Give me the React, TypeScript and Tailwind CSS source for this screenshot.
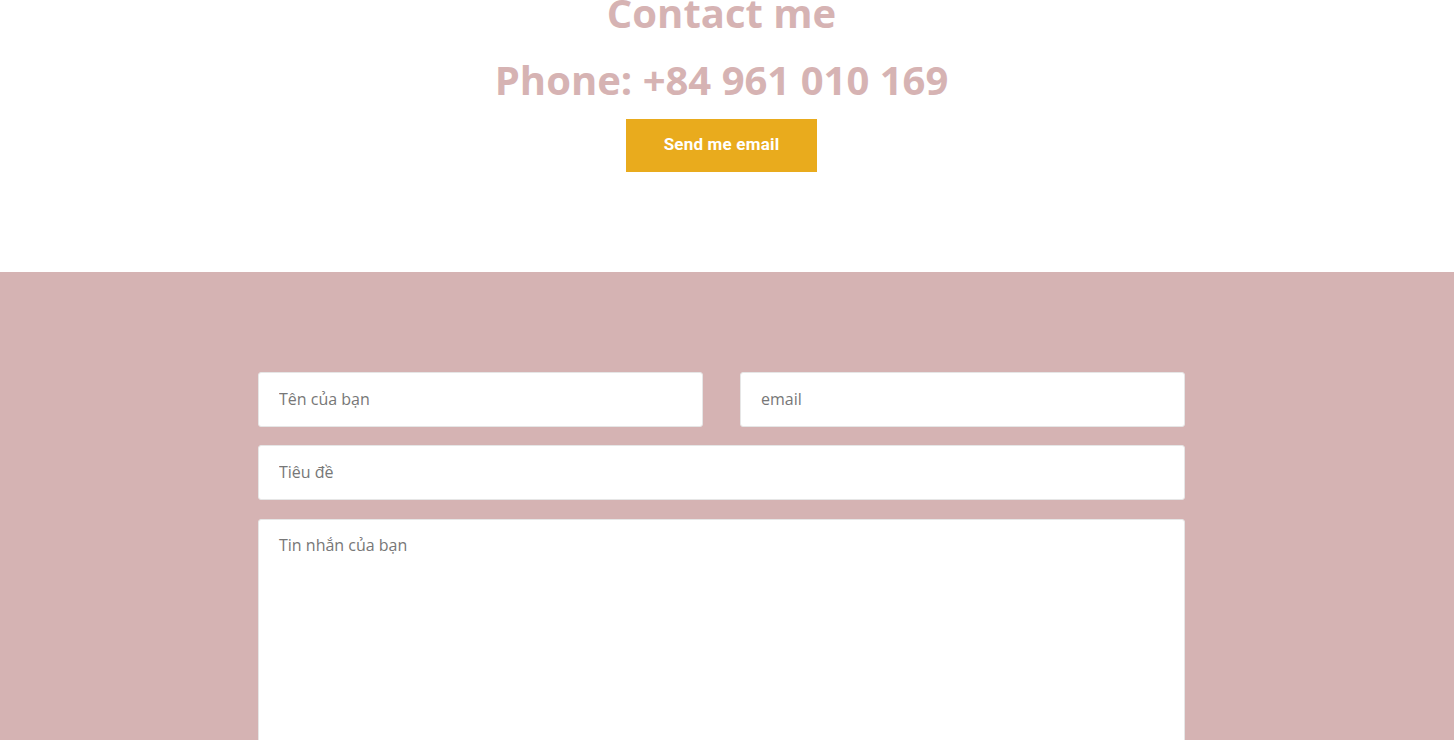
import React from 'react';

export default function App() {
  return <div className="min-h-[740px] bg-white pr-[11px]" style={{ fontFamily: '"Open Sans", sans-serif' }}>
      <section className="flex flex-col items-center bg-white pb-[100px]">
        <h2 className="-mt-[11px] mb-[19px] text-[40px] font-bold leading-[48px] text-[#d6b3b3]">
          Contact me
        </h2>
        <h3 className="mb-[15px] text-[40px] font-bold leading-[48px] text-[#d6b3b3]">
          Phone: +84 961 010 169
        </h3>
        <button className="h-[53px] w-[191px] bg-[#e9ab1d] pb-[2px] text-[17px] font-bold tracking-[0.2px] text-white" style={{ fontFamily: 'Roboto, sans-serif' }}>
          Send me email
        </button>
      </section>
      {/* Contact form */}
      <section className="-mr-[11px] bg-[#d5b3b3] pt-[100px] pr-[11px] pb-10">
        <form className="mx-auto flex w-[927px] flex-col">
          <div className="mb-[18px] grid grid-cols-2 gap-[37px]">
            <input placeholder="Tên của bạn" className="h-[55px] rounded-[3px] border border-[#e6e6e6] bg-white px-5 pb-[2px] text-[16px] text-[#777] placeholder:text-[#777] outline-none" />
            <input placeholder="email" className="h-[55px] rounded-[3px] border border-[#e6e6e6] bg-white px-5 pb-[2px] text-[16px] text-[#777] placeholder:text-[#777] outline-none" />
          </div>
          <input placeholder="Tiêu đề" className="mb-[19px] h-[55px] rounded-[3px] border border-[#e6e6e6] bg-white px-5 pb-[2px] text-[16px] text-[#777] placeholder:text-[#777] outline-none" />
          <textarea placeholder="Tin nhắn của bạn" className="h-[300px] resize-none rounded-[3px] border border-[#e6e6e6] bg-white px-5 py-[13px] text-[16px] text-[#777] placeholder:text-[#777] outline-none" />
        </form>
      </section>
    </div>;
}
